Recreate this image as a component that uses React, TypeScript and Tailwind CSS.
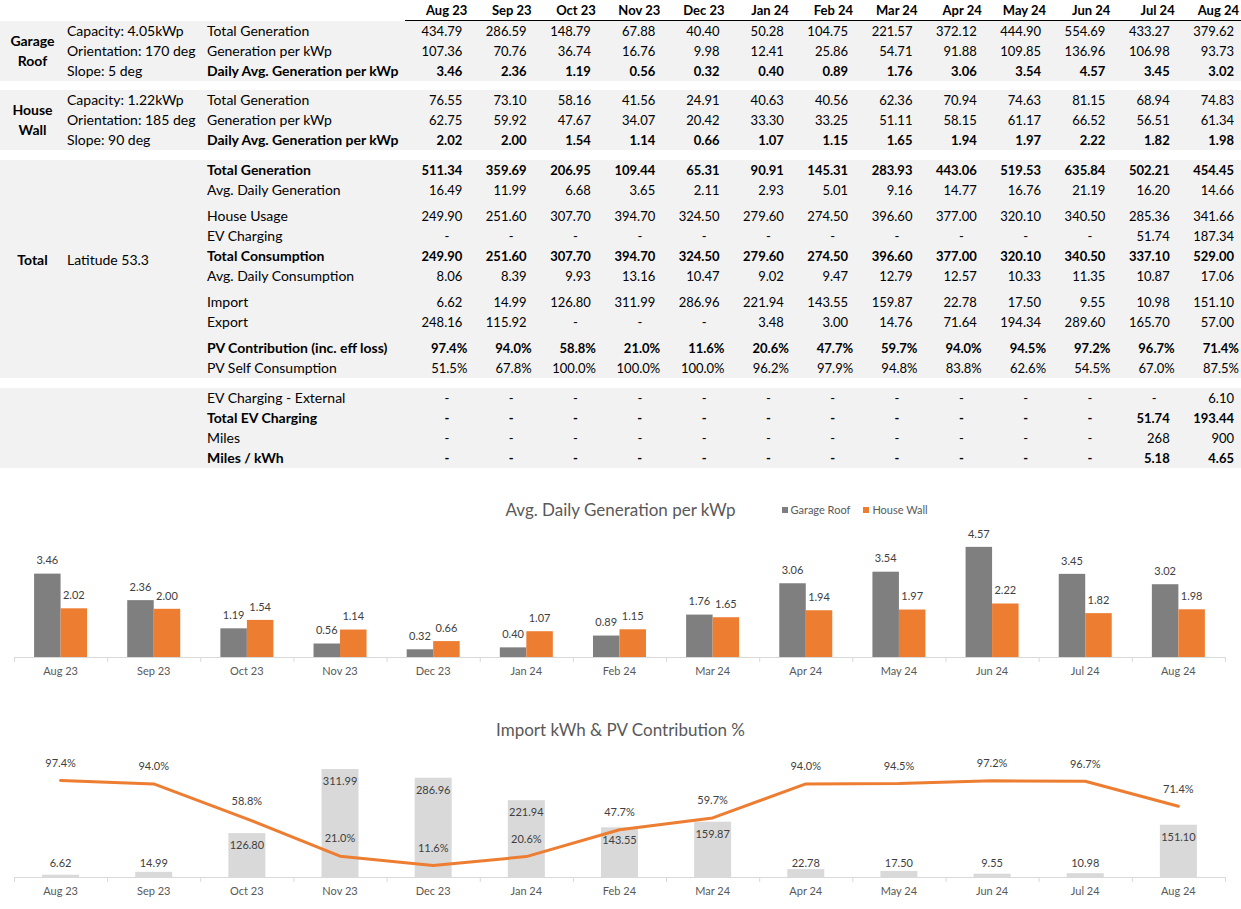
import React from "react"

const months = ["Aug 23", "Sep 23", "Oct 23", "Nov 23", "Dec 23", "Jan 24", "Feb 24", "Mar 24", "Apr 24", "May 24", "Jun 24", "Jul 24", "Aug 24"]

type Row = { label: string; values: string[]; bold?: boolean }

const dash11 = Array(11).fill("-")

const garageRows: Row[] = [
  { label: "Total Generation", values: ["434.79", "286.59", "148.79", "67.88", "40.40", "50.28", "104.75", "221.57", "372.12", "444.90", "554.69", "433.27", "379.62"] },
  { label: "Generation per kWp", values: ["107.36", "70.76", "36.74", "16.76", "9.98", "12.41", "25.86", "54.71", "91.88", "109.85", "136.96", "106.98", "93.73"] },
  { label: "Daily Avg. Generation per kWp", bold: true, values: ["3.46", "2.36", "1.19", "0.56", "0.32", "0.40", "0.89", "1.76", "3.06", "3.54", "4.57", "3.45", "3.02"] },
]

const wallRows: Row[] = [
  { label: "Total Generation", values: ["76.55", "73.10", "58.16", "41.56", "24.91", "40.63", "40.56", "62.36", "70.94", "74.63", "81.15", "68.94", "74.83"] },
  { label: "Generation per kWp", values: ["62.75", "59.92", "47.67", "34.07", "20.42", "33.30", "33.25", "51.11", "58.15", "61.17", "66.52", "56.51", "61.34"] },
  { label: "Daily Avg. Generation per kWp", bold: true, values: ["2.02", "2.00", "1.54", "1.14", "0.66", "1.07", "1.15", "1.65", "1.94", "1.97", "2.22", "1.82", "1.98"] },
]

const totalBlocks: Row[][] = [
  [
    { label: "Total Generation", bold: true, values: ["511.34", "359.69", "206.95", "109.44", "65.31", "90.91", "145.31", "283.93", "443.06", "519.53", "635.84", "502.21", "454.45"] },
    { label: "Avg. Daily Generation", values: ["16.49", "11.99", "6.68", "3.65", "2.11", "2.93", "5.01", "9.16", "14.77", "16.76", "21.19", "16.20", "14.66"] },
  ],
  [
    { label: "House Usage", values: ["249.90", "251.60", "307.70", "394.70", "324.50", "279.60", "274.50", "396.60", "377.00", "320.10", "340.50", "285.36", "341.66"] },
    { label: "EV Charging", values: [...dash11, "51.74", "187.34"] },
    { label: "Total Consumption", bold: true, values: ["249.90", "251.60", "307.70", "394.70", "324.50", "279.60", "274.50", "396.60", "377.00", "320.10", "340.50", "337.10", "529.00"] },
    { label: "Avg. Daily Consumption", values: ["8.06", "8.39", "9.93", "13.16", "10.47", "9.02", "9.47", "12.79", "12.57", "10.33", "11.35", "10.87", "17.06"] },
  ],
  [
    { label: "Import", values: ["6.62", "14.99", "126.80", "311.99", "286.96", "221.94", "143.55", "159.87", "22.78", "17.50", "9.55", "10.98", "151.10"] },
    { label: "Export", values: ["248.16", "115.92", "-", "-", "-", "3.48", "3.00", "14.76", "71.64", "194.34", "289.60", "165.70", "57.00"] },
  ],
  [
    { label: "PV Contribution (inc. eff loss)", bold: true, values: ["97.4%", "94.0%", "58.8%", "21.0%", "11.6%", "20.6%", "47.7%", "59.7%", "94.0%", "94.5%", "97.2%", "96.7%", "71.4%"] },
    { label: "PV Self Consumption", values: ["51.5%", "67.8%", "100.0%", "100.0%", "100.0%", "96.2%", "97.9%", "94.8%", "83.8%", "62.6%", "54.5%", "67.0%", "87.5%"] },
  ],
]

const evRows: Row[] = [
  { label: "EV Charging - External", values: [...dash11, "-", "6.10"] },
  { label: "Total EV Charging", bold: true, values: [...dash11, "51.74", "193.44"] },
  { label: "Miles", values: [...dash11, "268", "900"] },
  { label: "Miles / kWh", bold: true, values: [...dash11, "5.18", "4.65"] },
]

const garageDaily = [3.46, 2.36, 1.19, 0.56, 0.32, 0.4, 0.89, 1.76, 3.06, 3.54, 4.57, 3.45, 3.02]
const wallDaily = [2.02, 2.0, 1.54, 1.14, 0.66, 1.07, 1.15, 1.65, 1.94, 1.97, 2.22, 1.82, 1.98]
const imports = [6.62, 14.99, 126.8, 311.99, 286.96, 221.94, 143.55, 159.87, 22.78, 17.5, 9.55, 10.98, 151.1]
const pvContribution = [97.4, 94.0, 58.8, 21.0, 11.6, 20.6, 47.7, 59.7, 94.0, 94.5, 97.2, 96.7, 71.4]

function Value({ v, bold }: { v: string; bold?: boolean }) {
  const pad = v === "-" ? "pr-[20px]" : v.endsWith("%") ? "pr-[2px]" : "pr-[7px]"
  return <div className={`text-right text-[13px] ${pad} ${bold ? "font-bold" : ""}`}>{v}</div>
}

function RowCells({ row }: { row: Row }) {
  return (
    <>
      <div className={`pl-[2px] text-[14px] whitespace-nowrap ${row.bold ? "font-bold" : ""}`}>{row.label}</div>
      {row.values.map((v, i) => (
        <Value key={i} v={v} bold={row.bold} />
      ))}
    </>
  )
}

function PanelGroup({ name, details, rows }: { name: string[]; details: string[]; rows: Row[] }) {
  return (
    <div className="grid grid-cols-[65px_140px_200px_repeat(13,minmax(0,1fr))] auto-rows-[20px] items-center bg-[#f2f2f2]">
      <div className="row-span-3 flex flex-col items-center justify-center text-[14px] font-bold">
        {name.map(n => (
          <span key={n}>{n}</span>
        ))}
      </div>
      {rows.map((row, i) => (
        <React.Fragment key={row.label}>
          <div className="pl-[2px] text-[14px] whitespace-nowrap">{details[i]}</div>
          <RowCells row={row} />
        </React.Fragment>
      ))}
    </div>
  )
}

function Block({ rows }: { rows: Row[] }) {
  return (
    <div className="grid grid-cols-[200px_repeat(13,minmax(0,1fr))] auto-rows-[20px] items-center">
      {rows.map(row => (
        <RowCells key={row.label} row={row} />
      ))}
    </div>
  )
}

const cx = (i: number) => 14 + 93.15 * (i + 0.5)

function Axis() {
  return (
    <g>
      <line x1={14} x2={1225} y1={135.5} y2={135.5} stroke="#d9d9d9" />
      {months.concat("").map((_, k) => (
        <line key={k} x1={14.5 + 93.15 * k} x2={14.5 + 93.15 * k} y1={135} y2={140} stroke="#d9d9d9" />
      ))}
      {months.map((m, i) => (
        <text key={m} x={cx(i)} y={150} textAnchor="middle" dominantBaseline="middle" fontSize={11} fill="#595959">
          {m}
        </text>
      ))}
    </g>
  )
}

function GenerationChart() {
  const scale = 24.1
  return (
    <svg width={1241} height={170} className="block">
      {garageDaily.map((v, i) => {
        const h = v * scale
        const w = wallDaily[i] * scale
        return (
          <g key={i}>
            <rect x={cx(i) - 26.5} y={135 - h} width={26.5} height={h} fill="#7f7f7f" />
            <rect x={cx(i)} y={135 - w} width={26.5} height={w} fill="#ed7d31" />
            <text x={cx(i) - 13.25} y={135 - h - 12} textAnchor="middle" dominantBaseline="middle" fontSize={11} fill="#404040">
              {v.toFixed(2)}
            </text>
            <text x={cx(i) + 13.25} y={135 - w - 12} textAnchor="middle" dominantBaseline="middle" fontSize={11} fill="#404040">
              {wallDaily[i].toFixed(2)}
            </text>
          </g>
        )
      })}
      <Axis />
    </svg>
  )
}

function ImportChart() {
  const points = pvContribution.map((p, i) => `${cx(i)},${135 - p * 0.99}`).join(" ")
  return (
    <svg width={1241} height={167} className="block">
      {imports.map((v, i) => {
        const h = v * 0.346
        const top = 135 - h
        return (
          <g key={i}>
            <rect x={cx(i) - 18.5} y={top} width={37} height={h} fill="#d9d9d9" />
            <text x={cx(i)} y={Math.min(top + 13.5, 122)} textAnchor="middle" dominantBaseline="middle" fontSize={11} fill="#404040">
              {v.toFixed(2)}
            </text>
          </g>
        )
      })}
      <Axis />
      <polyline points={points} fill="none" stroke="#ed7d31" strokeWidth={3} strokeLinejoin="round" strokeLinecap="round" />
      {pvContribution.map((p, i) => (
        <text key={i} x={cx(i)} y={135 - p * 0.99 - 16.5} textAnchor="middle" dominantBaseline="middle" fontSize={11} fill="#404040">
          {p.toFixed(1)}%
        </text>
      ))}
    </svg>
  )
}

export default function App() {
  return (
    <div className="w-[1241px] h-[909px] overflow-hidden bg-white font-[Lato,sans-serif] text-black leading-[20px]">
      <div className="grid grid-cols-[65px_140px_200px_repeat(13,minmax(0,1fr))] h-[21px]">
        <div />
        <div />
        <div />
        {months.map(m => (
          <div key={m} className="border-b border-black pr-[2px] text-right text-[13px] font-bold">
            {m}
          </div>
        ))}
      </div>

      <PanelGroup name={["Garage", "Roof"]} details={["Capacity: 4.05kWp", "Orientation: 170 deg", "Slope: 5 deg"]} rows={garageRows} />

      <div className="mt-[9px]">
        <PanelGroup name={["House", "Wall"]} details={["Capacity: 1.22kWp", "Orientation: 185 deg", "Slope: 90 deg"]} rows={wallRows} />
      </div>

      <div className="mt-[10px] grid grid-cols-[65px_140px_1fr] bg-[#f2f2f2]">
        <div className="flex items-center justify-center pb-[18px] text-[14px] font-bold">Total</div>
        <div className="flex items-center pb-[18px] pl-[2px] text-[14px]">Latitude 53.3</div>
        <div className="flex flex-col gap-[6px]">
          {totalBlocks.map((rows, i) => (
            <Block key={i} rows={rows} />
          ))}
        </div>
      </div>

      <div className="mt-[10px] grid grid-cols-[205px_1fr] bg-[#f2f2f2]">
        <div />
        <Block rows={evRows} />
      </div>

      <div className="mt-[30px] grid grid-cols-[1fr_auto_1fr] items-center h-[24px]">
        <div />
        <div className="text-[17px] leading-[24px] text-[#595959]">Avg. Daily Generation per kWp</div>
        <div className="flex items-center gap-[3px] pl-[46px] text-[11px] text-[#595959]">
          <span className="w-[6px] h-[6px] bg-[#7f7f7f]" />
          <span className="mr-[10px]">Garage Roof</span>
          <span className="w-[6px] h-[6px] bg-[#ed7d31]" />
          <span>House Wall</span>
        </div>
      </div>
      <GenerationChart />

      <div className="mt-[26px] flex h-[24px] items-center justify-center">
        <div className="text-[17px] leading-[24px] text-[#595959]">Import kWh &amp; PV Contribution %</div>
      </div>
      <ImportChart />
    </div>
  )
}
